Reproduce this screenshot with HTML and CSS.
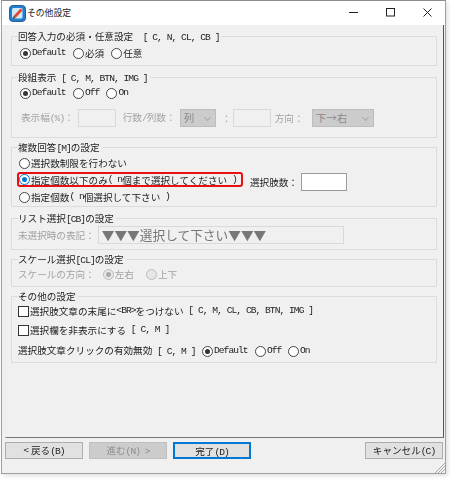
FILE: index.html
```html
<!DOCTYPE html>
<html lang="ja">
<head>
<meta charset="utf-8">
<title>その他設定</title>
<link rel="stylesheet" href="styles.css">
</head>
<body>
<div class="window">
  <header class="titlebar">
    <svg class="appicon" width="17" height="17" viewBox="0 0 17 17"><rect x="0.5" y="0.5" width="16" height="16" rx="3.5" fill="#1f7fd0" stroke="#2a5f8f"/><rect x="3" y="3" width="10.5" height="10.5" rx="1.5" fill="#cfe9f8"/><path d="M4.5 11 L11.5 3.5 L13.5 5.5 L6.5 13 Z" fill="#e4472f"/><path d="M4.5 11 L6.5 13 L3.5 14 Z" fill="#444"/></svg>
    <span class="title">その他設定</span>
    <span class="controls">
      <svg width="10" height="10" viewBox="0 0 10 10"><path d="M0 4.5H9" stroke="#222"/></svg>
      <svg width="10" height="10" viewBox="0 0 10 10"><rect x="0.5" y="0.5" width="8" height="7.5" fill="none" stroke="#222"/></svg>
      <svg width="10" height="10" viewBox="0 0 10 10"><path d="M0.5 0.5L8.5 8.5M8.5 0.5L0.5 8.5" stroke="#222"/></svg>
    </span>
  </header>
  <main class="panel">
    <fieldset class="group g1">
      <legend>回答入力の必須・任意設定<span class="l">&nbsp;&nbsp;[ C, N, CL, CB ]</span></legend>
      <div class="row">
        <label class="opt"><span class="radio on"></span><span class="l">Default</span></label>
        <label class="opt"><span class="radio"></span>必須</label>
        <label class="opt"><span class="radio"></span>任意</label>
      </div>
    </fieldset>
    <fieldset class="group g2">
      <legend>段組表示<span class="l">&nbsp;[ C, M, BTN, IMG ]</span></legend>
      <div class="row">
        <label class="opt"><span class="radio on"></span><span class="l">Default</span></label>
        <label class="opt o2"><span class="radio"></span><span class="l">Off</span></label>
        <label class="opt o3"><span class="radio"></span><span class="l">On</span></label>
      </div>
      <div class="row fields">
        <span class="dim w-a">表示幅<span class="l">(%)</span>：</span>
        <span class="box b-a"></span>
        <span class="dim w-b">行数<span class="l">/</span>列数：</span>
        <span class="select s-a">列<i class="chev"></i></span>
        <span class="dim w-c">：</span>
        <span class="box b-b"></span>
        <span class="dim w-d">方向：</span>
        <span class="select s-b">下→右<i class="chev"></i></span>
      </div>
    </fieldset>
    <fieldset class="group g3">
      <legend>複数回答<span class="l">[M]</span>の設定</legend>
      <div class="split">
        <div class="stack">
          <label class="opt first"><span class="radio"></span>選択数制限を行わない</label>
          <label class="opt marked"><span class="radio focus"></span>指定個数以下のみ<span class="l">( n</span>個まで選択してください<span class="l">&nbsp;)</span></label>
          <label class="opt last"><span class="radio"></span>指定個数<span class="l">( n</span>個選択して下さい<span class="l">&nbsp;)</span></label>
        </div>
        <div class="count">選択肢数：<span class="box live"></span></div>
      </div>
    </fieldset>
    <fieldset class="group g4">
      <legend>リスト選択<span class="l">[CB]</span>の設定</legend>
      <div class="row listrow">
        <span class="dim">未選択時の表記：</span>
        <span class="box wide">▼▼▼選択して下さい▼▼▼</span>
      </div>
    </fieldset>
    <fieldset class="group g5">
      <legend>スケール選択<span class="l">[CL]</span>の設定</legend>
      <div class="row scalerow">
        <span class="dim">スケールの方向：</span>
        <label class="opt dim s1"><span class="radio on off"></span>左右</label>
        <label class="opt dim s2"><span class="radio off"></span>上下</label>
      </div>
    </fieldset>
    <fieldset class="group g6">
      <legend>その他の設定</legend>
      <label class="opt c1"><span class="check"></span>選択肢文章の末尾に<span class="l">&lt;BR&gt;</span>をつけない<span class="l">&nbsp;[ C, M, CL, CB, BTN, IMG ]</span></label>
      <label class="opt c2"><span class="check"></span>選択欄を非表示にする<span class="l">&nbsp;[ C, M ]</span></label>
      <div class="row c3">
        <span class="c3text">選択肢文章クリックの有効無効<span class="l">&nbsp;[ C, M ]</span></span>
        <label class="opt"><span class="radio on"></span><span class="l">Default</span></label>
        <label class="opt o2"><span class="radio"></span><span class="l">Off</span></label>
        <label class="opt o3"><span class="radio"></span><span class="l">On</span></label>
      </div>
    </fieldset>
  </main>
  <footer class="buttons">
    <button class="btn">&lt; 戻る<span class="l">(B)</span></button>
    <button class="btn disabled">進む<span class="l">(N) &gt;</span></button>
    <button class="btn primary">完了<span class="l">(D)</span></button>
    <button class="btn cancel">キャンセル<span class="l">(C)</span></button>
    <svg class="grip" width="11" height="11" viewBox="0 0 11 11"><path d="M1 11L11 1M4 11L11 4M7 11L11 7" stroke="#aaa" fill="none"/></svg>
  </footer>
</div>
</body>
</html>
```
FILE: styles.css
```css
* { box-sizing: border-box; }
html, body { margin: 0; padding: 0; }
body {
  width: 452px;
  height: 480px;
  overflow: hidden;
  background: #fff;
  font-family: "Noto Sans CJK JP", "Liberation Mono", sans-serif;
  font-size: 9.6px;
  line-height: 12px;
  color: #222;
}
.l {
  font-family: "Liberation Mono", monospace;
  letter-spacing: -0.96px;
}
.window {
  width: 445px;
  height: 474px;
  margin-left: 1px;
  background: #f0f0f0;
  border: 1px solid #a0a0a0;
  border-top-color: #8c8c8c;
  box-shadow: 2px 2px 4px rgba(0,0,0,.12);
  filter: blur(0.3px);
}
.titlebar {
  height: 24px;
  background: #fff;
  display: flex;
  align-items: center;
  padding-left: 7px;
}
.appicon { flex: none; }
.title { margin-left: 1px; font-size: 8.8px; }
.controls {
  margin-left: auto;
  display: flex;
  gap: 27px;
  padding-right: 12px;
}
.panel {
  height: 413px;
  margin-left: 3px;
  width: 439px;
  border-right: 1px solid #555;
  border-bottom: 1px solid #777;
  border-left: 1px solid #ececec;
  padding: 5px 5px 0 5px;
}
.group {
  margin: 0;
  width: 426px;
  padding: 0 0 0 6px;
  border: 1px solid #dcdcdc;
  min-inline-size: 0;
}
.group legend {
  padding: 0 2px 0 0;
  margin: 0;
  height: 12px;
  line-height: 12px;
}
.g1 { height: 36px; }
.g2 { height: 67px; margin-top: 5px; }
.g3 { height: 66px; margin-top: 3px; }
.g4 { height: 38px; margin-top: 5px; }
.g5 { height: 34px; margin-top: 3px; }
.g6 { height: 73px; margin-top: 3px; }
.row { display: flex; align-items: center; }
.opt { display: inline-flex; align-items: center; white-space: nowrap; }
.g1 .row { padding: 5px 0 0 2px; gap: 7px; }
.g2 .row:first-of-type { padding: 4px 0 0 2px; gap: 7px; }
.g1 .row .opt:first-child, .g2 .row .opt:first-child { width: 46px; margin-right: 0; }
.radio {
  flex: none;
  width: 11px;
  height: 11px;
  border: 1px solid #444;
  border-radius: 50%;
  background: #fff;
  margin-right: 1px;
  position: relative;
  display: inline-block;
}
.radio.on::after, .radio.focus::after {
  content: "";
  position: absolute;
  left: 2px; top: 2px;
  width: 5px; height: 5px;
  border-radius: 50%;
  background: #333;
}
.radio.focus { border-color: #0078d7; }
.radio.focus::after { background: #0078d7; }
.radio.off { border-color: #bbb; background: #e6e6e6; }
.radio.off::after { background: #aaa; }
.dim { color: #a2a2a2; }
.fields { margin-top: 10px; height: 18px; padding-left: 3px; white-space: nowrap; }
.box {
  display: block;
  background: #f0f0f0;
  border: 1px solid #d9d9d9;
  height: 18px;
  flex: none;
}
.b-a { width: 38px; margin-left: 4px; }
.w-b { margin-left: 7px; width: 50px; }
.select {
  display: flex;
  align-items: center;
  background: #cccccc;
  border: 1px solid #bdbdbd;
  color: #8a8a8a;
  height: 18px;
  flex: none;
  padding-left: 3px;
  font-size: 10.5px;
  position: relative;
}
.s-a { width: 36px; margin-left: 7px; }
.w-c { margin-left: 6px; width: 10px; }
.b-b { width: 38px; margin-left: 1px; }
.w-d { margin-left: 4px; width: 34px; }
.s-b { width: 62px; margin-left: 3px; }
.chev {
  position: absolute;
  right: 5px;
  top: 5px;
  width: 5px;
  height: 5px;
  border-right: 1px solid #aaa;
  border-bottom: 1px solid #aaa;
  transform: rotate(45deg);
}
.split { display: flex; }
.stack { display: flex; flex-direction: column; width: 230px; margin-left: 1px; align-items: flex-start; }
.first { margin-top: 4px; }
.marked {
  border: 2px solid #e81010;
  border-radius: 3px;
  height: 15px;
  margin: 3px 0 0 -2px;
  width: 226px;
}
.last { margin-top: 4px; }
.count { display: flex; align-items: center; margin-left: 1px; margin-top: 20px; height: 18px; }
.live { width: 46px; height: 18px; margin-left: 3px; background: #fff; border: 1px solid #9a9a9a; }
.listrow { padding-top: 2px; }
.wide {
  width: 246px;
  margin-left: 3px;
  font-size: 12.7px;
  line-height: 16px;
  padding-left: 3px;
  color: #777;
}
.scalerow { padding-top: 3px; }
.s1 { margin-left: 8px; }
.s2 { margin-left: 12px; }
.check {
  flex: none;
  width: 11px;
  height: 11px;
  border: 1px solid #333;
  background: #fff;
  margin-right: 1px;
  display: inline-block;
}
.c1 { display: flex; margin-top: 3px; }
.c2 { display: flex; margin-top: 7px; }
.c3 { margin-top: 8px; }
.c3text { width: 184px; }
.c3 .opt:first-child, .c3 .opt:nth-child(2) { width: 53px; }
.c3 .o2 { width: 33px; }
.buttons {
  display: flex;
  position: relative;
  padding: 4px 2px 0 3px;
  height: 35px;
}
.btn {
  appearance: none;
  width: 78px;
  height: 17px;
  margin: 0 6px 0 0;
  padding: 0;
  font: inherit;
  line-height: 15px;
  color: #222;
  background: #e1e1e1;
  border: 1px solid #adadad;
}
.disabled { background: #cccccc; border-color: #bfbfbf; color: #8e8e8e; }
.primary { border: 2px solid #0078d7; }
.cancel { margin: 0 0 0 auto; }
.grip { position: absolute; right: 0; bottom: 0; }
```
